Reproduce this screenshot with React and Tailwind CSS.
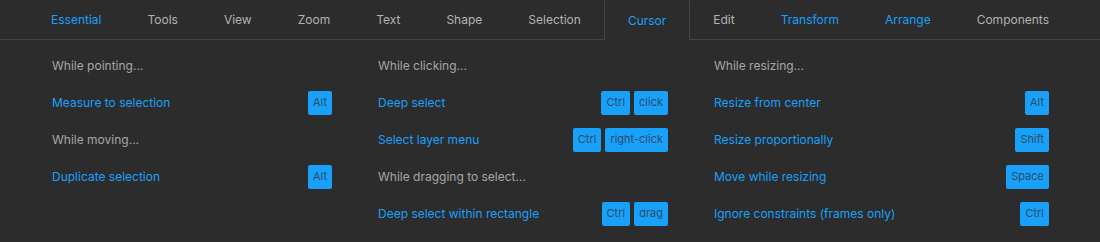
import React from "react";

const tabs = [
  { name: "Essential", color: "text-[#18a0fb]" },
  { name: "Tools", color: "text-[#b3b3b3]" },
  { name: "View", color: "text-[#b3b3b3]" },
  { name: "Zoom", color: "text-[#b3b3b3]" },
  { name: "Text", color: "text-[#b3b3b3]" },
  { name: "Shape", color: "text-[#b3b3b3]" },
  { name: "Selection", color: "text-[#b3b3b3]" },
  { name: "Cursor", color: "text-[#18a0fb]", active: true },
  { name: "Edit", color: "text-[#b3b3b3]" },
  { name: "Transform", color: "text-[#18a0fb]" },
  { name: "Arrange", color: "text-[#18a0fb]" },
  { name: "Components", color: "text-[#b3b3b3]" },
];

const columns = [
  {
    w: "w-[280px]",
    rows: [
      { h: "While pointing..." },
      { l: "Measure to selection", k: ["Alt"] },
      { h: "While moving..." },
      { l: "Duplicate selection", k: ["Alt"] },
    ],
  },
  {
    w: "w-[290px]",
    rows: [
      { h: "While clicking..." },
      { l: "Deep select", k: ["Ctrl", "click"] },
      { l: "Select layer menu", k: ["Ctrl", "right-click"] },
      { h: "While dragging to select..." },
      { l: "Deep select within rectangle", k: ["Ctrl", "drag"] },
    ],
  },
  {
    w: "w-[335px]",
    rows: [
      { h: "While resizing..." },
      { l: "Resize from center", k: ["Alt"] },
      { l: "Resize proportionally", k: ["Shift"] },
      { l: "Move while resizing", k: ["Space"] },
      { l: "Ignore constraints (frames only)", k: ["Ctrl"] },
    ],
  },
];

export default function App() {
  return (
    <div
      className="w-[1100px] h-[242px] bg-[#2c2c2c] overflow-hidden"
      style={{ fontFamily: "Inter, 'Noto Sans', sans-serif" }}
    >
      <div className="flex justify-center border-b border-[#444] pt-px">
        {tabs.map((t) =>
          t.active ? (
            <div
              key={t.name}
              className={`h-[39px] -mb-px px-[23px] flex items-center text-[12px] bg-[#2c2c2c] border-l border-r border-[#444] ${t.color}`}
            >
              {t.name}
            </div>
          ) : (
            <div
              key={t.name}
              className={`h-[38px] px-[23px] flex items-center text-[12px] ${t.color}`}
            >
              {t.name}
            </div>
          )
        )}
      </div>
      <div className="flex pl-[52px] pt-[7px] gap-[46px]">
        {columns.map((c, i) => (
          <div key={i} className={`${c.w} flex flex-col`}>
            {c.rows.map((r, j) =>
              r.h ? (
                <div
                  key={j}
                  className="h-[37px] flex items-center text-[12px] text-[#a6a6a6]"
                >
                  {r.h}
                </div>
              ) : (
                <div
                  key={j}
                  className="h-[37px] flex items-center justify-between text-[12px] text-[#18a0fb]"
                >
                  <span>{r.l}</span>
                  <div className="flex gap-[4px]">
                    {r.k.map((k) => (
                      <span
                        key={k}
                        className="h-6 px-[5px] flex items-center rounded-[2px] bg-[#18a0fb] text-[11px] text-[#2e4d63]"
                      >
                        {k}
                      </span>
                    ))}
                  </div>
                </div>
              )
            )}
          </div>
        ))}
      </div>
    </div>
  );
}
